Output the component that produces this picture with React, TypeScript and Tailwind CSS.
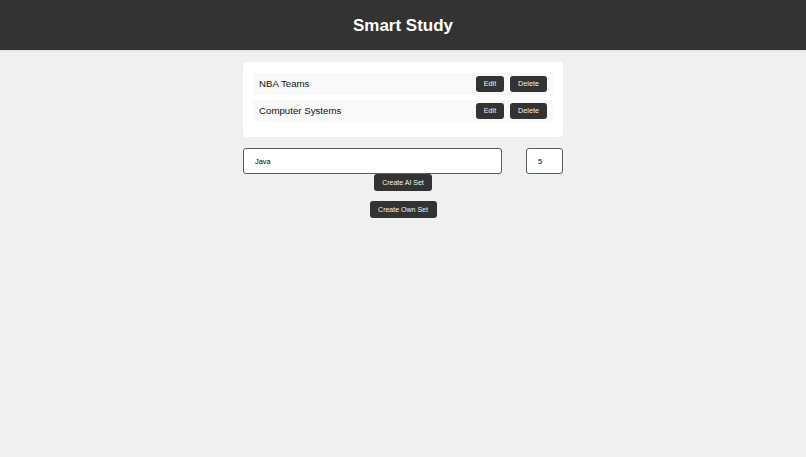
import React from "react";

const sets = ["NBA Teams", "Computer Systems"];

export default function App() {
  return (
    <div className="min-h-[457px] bg-[#f0f0f0] font-['Liberation_Sans',Arial,sans-serif]">
      <header className="h-[50px] bg-[#333333] flex items-center justify-center shadow-[0_1px_2px_rgba(0,0,0,0.08)]">
        <h1 className="text-white font-bold text-[17px] leading-none">Smart Study</h1>
      </header>
      <div className="w-[320px] mx-auto mt-[12px]">
        <div className="bg-white rounded-[4px] pt-[11px] pb-[10px] px-[10px]">
          {sets.map((s) => (
            <div
              key={s}
              className="h-[22px] mb-[5px] bg-[#f9f9f9] rounded-[3px] flex items-center justify-between pl-[6px] pr-[6px]"
            >
              <span className="text-[9.7px] text-[#111]">{s}</span>
              <div className="flex gap-[6px]">
                <button className="h-[16px] w-[28px] bg-[#333333] text-[#f2f2f2] text-[7.2px] leading-none rounded-[3px] flex items-center justify-center">
                  Edit
                </button>
                <button className="h-[16px] w-[37px] bg-[#333333] text-[#f2f2f2] text-[7.2px] leading-none rounded-[3px] flex items-center justify-center">
                  Delete
                </button>
              </div>
            </div>
          ))}
        </div>
        <div className="mt-[11px] flex justify-between">
          <input
            defaultValue="Java"
            className="w-[259px] h-[26px] border-[1.5px] border-[#5a5a5a] rounded-[3px] bg-white pl-[11px] text-[7.4px] text-black outline-none"
          />
          <input
            defaultValue="5"
            className="w-[37px] h-[26px] border-[1.5px] border-[#5a5a5a] rounded-[3px] bg-white pl-[11px] text-[7.4px] text-black outline-none"
          />
        </div>
      </div>
      <div className="flex flex-col items-center">
        <button className="h-[17px] w-[58px] bg-[#333333] text-[#f2f2f2] text-[7px] leading-none rounded-[3px] flex items-center justify-center">
          Create AI Set
        </button>
        <button className="mt-[10px] h-[17px] w-[67px] bg-[#333333] text-[#f2f2f2] text-[7px] leading-none rounded-[3px] flex items-center justify-center">
          Create Own Set
        </button>
      </div>
    </div>
  );
}
